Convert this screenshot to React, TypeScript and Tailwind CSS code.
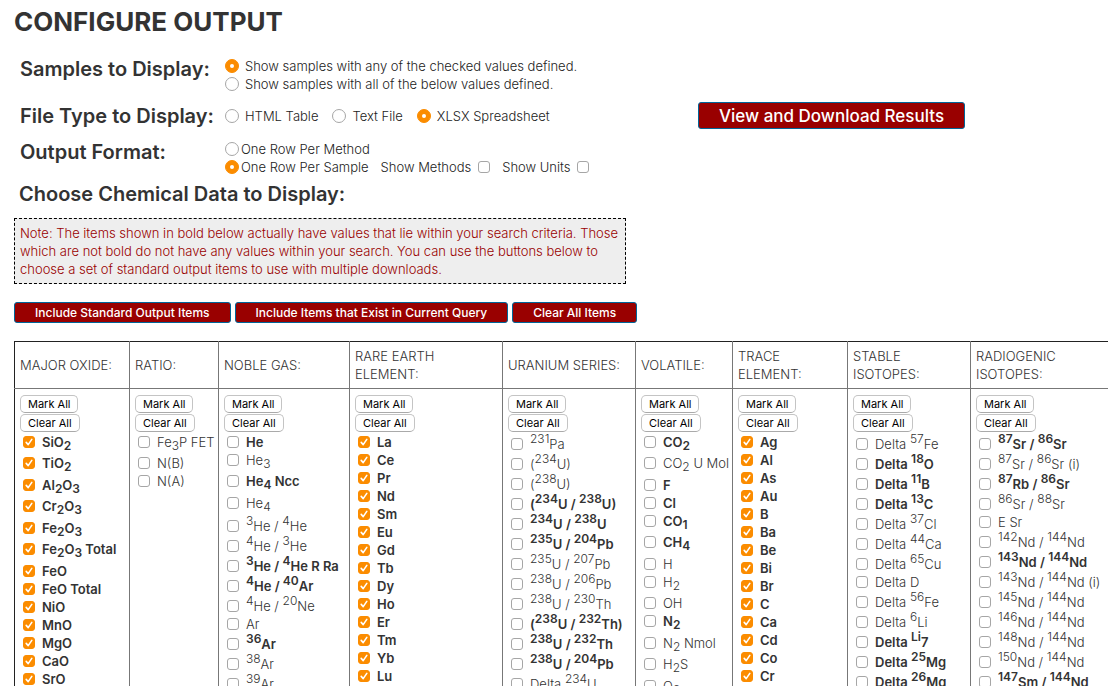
import React from "react";

type Item = { text: string; bold: boolean };
type Column = { title: string; width: string; checked?: boolean; items: string[] };

// Item syntax: a leading "*" marks bold, "^{..}" is superscript and "_{..}" is subscript.
const columns: Column[] = [
  {
    title: "MAJOR OXIDE:",
    width: "w-[115px]",
    checked: true,
    items: ["*SiO_{2}", "*TiO_{2}", "*Al_{2}O_{3}", "*Cr_{2}O_{3}", "*Fe_{2}O_{3}", "*Fe_{2}O_{3} Total", "*FeO", "*FeO Total", "*NiO", "*MnO", "*MgO", "*CaO", "*SrO"],
  },
  { title: "RATIO:", width: "w-[89px]", items: ["Fe_{3}P FET", "N(B)", "N(A)"] },
  {
    title: "NOBLE GAS:",
    width: "w-[131px]",
    items: ["*He", "He_{3}", "*He_{4} Ncc", "He_{4}", "^{3}He / ^{4}He", "^{4}He / ^{3}He", "*^{3}He / ^{4}He R Ra", "*^{4}He / ^{40}Ar", "^{4}He / ^{20}Ne", "Ar", "*^{36}Ar", "^{38}Ar", "^{39}Ar"],
  },
  {
    title: "RARE EARTH ELEMENT:",
    width: "w-[153px]",
    checked: true,
    items: ["*La", "*Ce", "*Pr", "*Nd", "*Sm", "*Eu", "*Gd", "*Tb", "*Dy", "*Ho", "*Er", "*Tm", "*Yb", "*Lu"],
  },
  {
    title: "URANIUM SERIES:",
    width: "w-[133px]",
    items: ["^{231}Pa", "(^{234}U)", "(^{238}U)", "*(^{234}U / ^{238}U)", "*^{234}U / ^{238}U", "*^{235}U / ^{204}Pb", "^{235}U / ^{207}Pb", "^{238}U / ^{206}Pb", "^{238}U / ^{230}Th", "*(^{238}U / ^{232}Th)", "*^{238}U / ^{232}Th", "*^{238}U / ^{204}Pb", "Delta ^{234}U"],
  },
  {
    title: "VOLATILE:",
    width: "w-[97px]",
    items: ["*CO_{2}", "CO_{2} U Mol", "*F", "*Cl", "*CO_{1}", "*CH_{4}", "H", "H_{2}", "OH", "*N_{2}", "N_{2} Nmol", "H_{2}S", "O_{2}"],
  },
  {
    title: "TRACE ELEMENT:",
    width: "w-[115px]",
    checked: true,
    items: ["*Ag", "*Al", "*As", "*Au", "*B", "*Ba", "*Be", "*Bi", "*Br", "*C", "*Ca", "*Cd", "*Co", "*Cr"],
  },
  {
    title: "STABLE ISOTOPES:",
    width: "w-[123px]",
    items: ["Delta ^{57}Fe", "*Delta ^{18}O", "*Delta ^{11}B", "*Delta ^{13}C", "Delta ^{37}Cl", "Delta ^{44}Ca", "Delta ^{65}Cu", "Delta D", "Delta ^{56}Fe", "Delta ^{6}Li", "*Delta ^{Li}7", "*Delta ^{25}Mg", "*Delta ^{26}Mg"],
  },
  {
    title: "RADIOGENIC ISOTOPES:",
    width: "w-[160px]",
    items: ["*^{87}Sr / ^{86}Sr", "^{87}Sr / ^{86}Sr (i)", "*^{87}Rb / ^{86}Sr", "^{86}Sr / ^{88}Sr", "E Sr", "^{142}Nd / ^{144}Nd", "*^{143}Nd / ^{144}Nd", "^{143}Nd / ^{144}Nd (i)", "^{145}Nd / ^{144}Nd", "^{146}Nd / ^{144}Nd", "^{148}Nd / ^{144}Nd", "^{150}Nd / ^{144}Nd", "*^{147}Sm / ^{144}Nd"],
  },
];

function parse(raw: string): Item {
  return raw.startsWith("*") ? { text: raw.slice(1), bold: true } : { text: raw, bold: false };
}

function Formula({ text }: { text: string }) {
  const parts = text.split(/([\^_]\{[^}]*\})/).filter(Boolean);
  return (
    <>
      {parts.map((part, i) => {
        if (part.startsWith("^{")) return <sup key={i} className="text-[12px]">{part.slice(2, -1)}</sup>;
        if (part.startsWith("_{")) return <sub key={i} className="text-[12px]">{part.slice(2, -1)}</sub>;
        return <React.Fragment key={i}>{part}</React.Fragment>;
      })}
    </>
  );
}

function Checkbox({ checked }: { checked?: boolean }) {
  return (
    <span className="relative block size-3 shrink-0">
      <input
        type="checkbox"
        defaultChecked={checked}
        className="peer block size-3 appearance-none rounded-[3px] border border-[#a6a6a6] bg-white checked:border-[#fb8c00] checked:bg-[#fb8c00]"
      />
      <svg viewBox="0 0 12 12" className="pointer-events-none absolute inset-0 hidden size-3 peer-checked:block" fill="none" stroke="#fff" strokeWidth="1.6" strokeLinecap="round" strokeLinejoin="round">
        <path d="M3.2 6.4 5.2 8.6 8.8 3.4" />
      </svg>
    </span>
  );
}

function Radio({ name, checked, gap, children }: { name: string; checked?: boolean; gap: string; children: string }) {
  return (
    <label className={`flex items-center whitespace-nowrap ${gap}`}>
      <span className="relative block size-3.5 shrink-0">
        <input
          type="radio"
          name={name}
          defaultChecked={checked}
          className="peer block size-3.5 appearance-none rounded-full border border-[#a6a6a6] bg-white checked:border-[#fb8c00] checked:bg-[#fb8c00]"
        />
        <span className="pointer-events-none absolute inset-[5px] hidden rounded-full bg-white peer-checked:block" />
      </span>
      {children}
    </label>
  );
}

function ItemList({ column }: { column: Column }) {
  let subRows = 0;
  return (
    <ul>
      {column.items.map((raw) => {
        const { text, bold } = parse(raw);
        let height = "h-[18px]";
        if (text.includes("^")) height = "h-5 pt-0.5";
        else if (text.includes("_")) {
          height = subRows % 2 === 0 ? "h-[21px]" : "h-[22px]";
          subRows += 1;
        }
        return (
          <li key={raw} className={height}>
            <label className={`flex h-[18px] items-center gap-[7px] pl-[3px] whitespace-nowrap ${bold ? "font-semibold" : "font-light"}`}>
              <Checkbox checked={column.checked} />
              <span>
                <Formula text={text} />
              </span>
            </label>
          </li>
        );
      })}
    </ul>
  );
}

function SmallButton({ children }: { children: string }) {
  return (
    <button type="button" className="block h-[18px] rounded-[5px] border border-[#c4c4c4] border-b-[#aaa] bg-white px-[7px] text-[11px] leading-4 whitespace-nowrap text-black">
      {children}
    </button>
  );
}

function RedButton({ children }: { children: string }) {
  return (
    <button type="button" className="h-[21px] rounded-[3px] border border-[#006699] bg-[#990000] px-5 text-[12px] leading-4 font-medium whitespace-nowrap text-white">
      {children}
    </button>
  );
}

export default function App() {
  return (
    <main className="overflow-x-hidden bg-white pt-1.5 pb-4 pl-3.5 font-['Inter','Liberation_Sans',sans-serif] text-[13px] leading-[18px] text-[#333]">
      <h1 className="text-[26px] leading-8 font-bold">CONFIGURE OUTPUT</h1>

      <form className="mt-[19px] grid grid-cols-[205px_473px_auto] justify-start gap-y-[9px] pl-1.5 font-light text-[#222]">
        <h2 className="text-[20px] leading-6 font-semibold whitespace-nowrap text-[#333]">Samples to Display:</h2>
        <div className="col-span-2">
          <Radio name="samples" checked gap="gap-1.5">Show samples with any of the checked values defined.</Radio>
          <Radio name="samples" gap="gap-1.5">Show samples with all of the below values defined.</Radio>
        </div>

        <h2 className="self-center text-[20px] leading-6 font-semibold whitespace-nowrap text-[#333]">File Type to Display:</h2>
        <div className="flex items-center gap-3.5">
          <Radio name="file" gap="gap-1.5">HTML Table</Radio>
          <Radio name="file" gap="gap-1.5">Text File</Radio>
          <Radio name="file" checked gap="gap-1.5">XLSX Spreadsheet</Radio>
        </div>
        <button type="button" className="h-[27px] rounded-[3px] border border-[#006699] bg-[#990000] px-5 text-[17px] leading-6 font-medium whitespace-nowrap text-white">
          View and Download Results
        </button>

        <h2 className="pt-0.5 text-[20px] leading-6 font-semibold whitespace-nowrap text-[#333]">Output Format:</h2>
        <div className="col-span-2 pt-0.5">
          <Radio name="format" gap="gap-0.5">One Row Per Method</Radio>
          <div className="flex items-center gap-3">
            <Radio name="format" checked gap="gap-0.5">One Row Per Sample</Radio>
            <label className="flex items-center gap-[7px]">Show Methods <Checkbox /></label>
            <label className="flex items-center gap-[7px]">Show Units <Checkbox /></label>
          </div>
        </div>
      </form>

      <h2 className="mt-1.5 pl-[5px] text-[20px] leading-6 font-semibold">Choose Chemical Data to Display:</h2>

      <p className="mt-3 max-w-[612px] border border-dashed border-black bg-[#eee] px-[5px] py-[5px] font-light text-[#990000]">
        Note: The items shown in bold below actually have values that lie within your search criteria. Those which are not bold do not have any values within your search. You can use the buttons below to choose a set of standard output items to use with multiple downloads.
      </p>

      <div className="mt-[18px] flex gap-1">
        <RedButton>Include Standard Output Items</RedButton>
        <RedButton>Include Items that Exist in Current Query</RedButton>
        <RedButton>Clear All Items</RedButton>
      </div>

      <table className="mt-[18px] w-[1116px] table-fixed border-collapse border border-[#222]">
        <thead>
          <tr>
            {columns.map((c) => (
              <th key={c.title} scope="col" className={`h-[47px] border border-[#777] border-t-[#222] px-[5px] py-[5px] text-left align-middle font-light first:border-l-[#222] ${c.width}`}>
                {c.title}
              </th>
            ))}
          </tr>
        </thead>
        <tbody>
          <tr>
            {columns.map((c) => (
              <td key={c.title} className="border border-[#777] px-[5px] pt-1.5 pb-2 align-top first:border-l-[#222]">
                <div className="mb-px grid justify-items-start gap-px">
                  <SmallButton>Mark All</SmallButton>
                  <SmallButton>Clear All</SmallButton>
                </div>
                <ItemList column={c} />
              </td>
            ))}
          </tr>
        </tbody>
      </table>
    </main>
  );
}
